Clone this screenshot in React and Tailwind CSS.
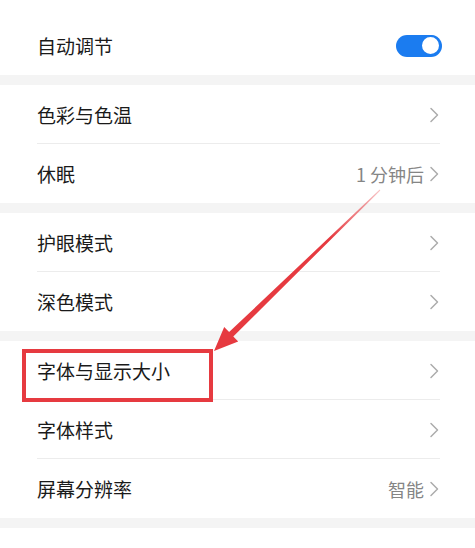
const font = { fontFamily: '"Noto Sans CJK SC", "Noto Sans", sans-serif' };

function Chevron() {
  return (
    <svg width="10" height="16" viewBox="0 0 10 16" className="ml-[1px]">
      <path d="M2 1.5 L8.5 8 L2 14.5" fill="none" stroke="#acacac" strokeWidth="1.5" strokeLinecap="round" strokeLinejoin="round" />
    </svg>
  );
}

function Row({ label, value, last, children }) {
  return (
    <div className="relative h-[59px] flex items-center pl-[37px] pr-[36px]">
      <span className="text-[19px] text-[#1a1a1a] flex-1 leading-none">{label}</span>
      {value && <span className="text-[18px] text-[#858585] mr-[4px] leading-none">{value}</span>}
      {children || <Chevron />}
      {!last && <div className="absolute bottom-0 left-[37px] right-[35px] h-px bg-[#ececec]" />}
    </div>
  );
}

function Toggle() {
  return (
    <div className="w-[46px] h-[22px] rounded-full bg-[#1b7cf0] flex items-center justify-end pr-[1px] mr-[-3px]">
      <div className="w-[21px] h-[21px] rounded-full bg-white border-2 border-[#1b7cf0]" />
    </div>
  );
}

function Gap() {
  return <div className="h-[10px] bg-[#f4f4f4]" />;
}

export default function App() {
  return (
    <div className="relative w-[475px] h-[548px] overflow-hidden bg-white" style={font}>
      <div className="pt-[16px]">
        <Row label="自动调节" last>
          <Toggle />
        </Row>
      </div>
      <Gap />
      <Row label="色彩与色温" />
      <Row label="休眠" value="1 分钟后" last />
      <Gap />
      <Row label="护眼模式" />
      <Row label="深色模式" last />
      <Gap />
      <div className="relative">
        <Row label="字体与显示大小" />
        <div className="absolute left-[22px] top-[8px] w-[191px] h-[53px] border-[4px] border-[#e63a40]" />
      </div>
      <Row label="字体样式" />
      <Row label="屏幕分辨率" value="智能" last />
      <Gap />

      <svg className="absolute inset-0 pointer-events-none" width="475" height="548" viewBox="0 0 475 548">
        <defs>
          <linearGradient id="ar" x1="380" y1="190" x2="214" y2="351" gradientUnits="userSpaceOnUse">
            <stop offset="0" stopColor="#e63a40" stopOpacity="0.3" />
            <stop offset="0.3" stopColor="#e63a40" />
            <stop offset="1" stopColor="#e63a40" />
          </linearGradient>
        </defs>
        <polygon
          points="214,351 238.2,341.5 233.3,336.5 380.3,190.4 379.7,189.6 229.1,332.1 224.2,327.1"
          fill="url(#ar)"
        />
      </svg>
    </div>
  );
}
